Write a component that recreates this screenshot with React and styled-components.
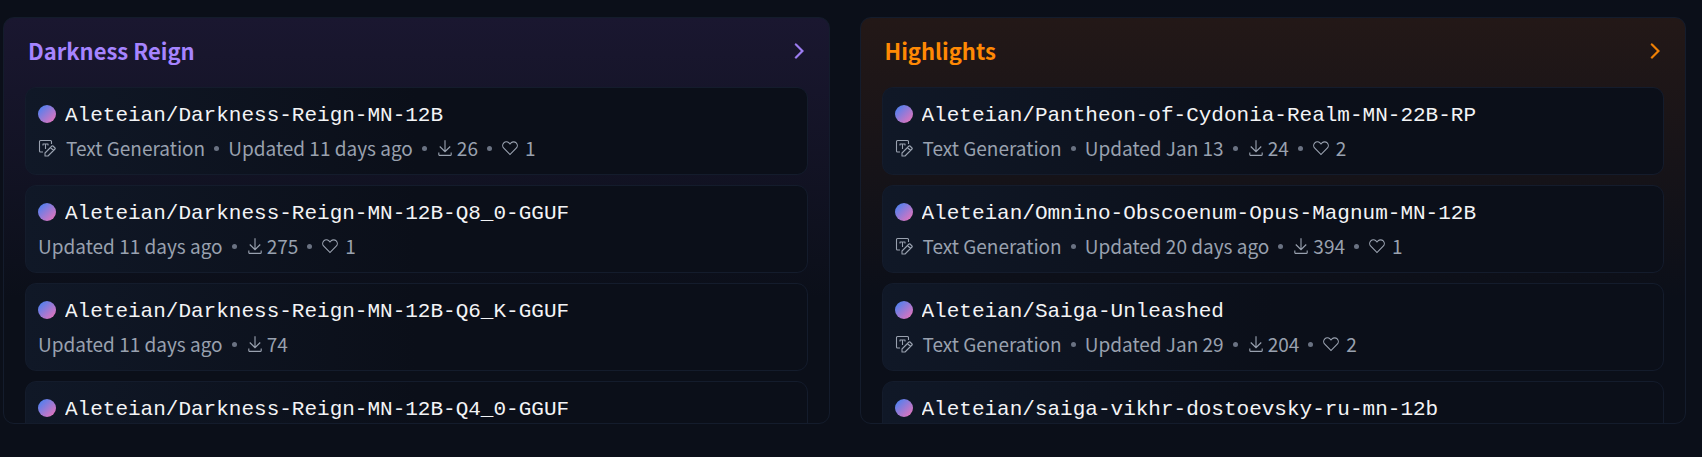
import styled, { createGlobalStyle } from "styled-components";

const darkness = [
	{ name: "Aleteian/Darkness-Reign-MN-12B", task: "Text Generation", updated: "11 days ago", downloads: 26, likes: 1 },
	{ name: "Aleteian/Darkness-Reign-MN-12B-Q8_0-GGUF", updated: "11 days ago", downloads: 275, likes: 1 },
	{ name: "Aleteian/Darkness-Reign-MN-12B-Q6_K-GGUF", updated: "11 days ago", downloads: 74 },
	{ name: "Aleteian/Darkness-Reign-MN-12B-Q4_0-GGUF" },
];

const highlights = [
	{ name: "Aleteian/Pantheon-of-Cydonia-Realm-MN-22B-RP", task: "Text Generation", updated: "Jan 13", downloads: 24, likes: 2 },
	{ name: "Aleteian/Omnino-Obscoenum-Opus-Magnum-MN-12B", task: "Text Generation", updated: "20 days ago", downloads: 394, likes: 1 },
	{ name: "Aleteian/Saiga-Unleashed", task: "Text Generation", updated: "Jan 29", downloads: 204, likes: 2 },
	{ name: "Aleteian/saiga-vikhr-dostoevsky-ru-mn-12b" },
];

const ChevronIcon = () => (
	<svg width="18" height="24" viewBox="4 0 24 32" fill="currentColor" stroke="currentColor" aria-hidden="true">
		<path d="M22 16 12 26l-1.4-1.4 8.6-8.6-8.6-8.6L12 6z" />
	</svg>
);

const TextIcon = () => (
	<svg width="18" height="18" viewBox="0 0 36 36" fill="none" stroke="currentColor" strokeWidth="2.2" strokeLinejoin="round" aria-hidden="true">
		<path d="M27 10V5q0-2-2-2H5Q3 3 3 5v19q0 2 2 2h5" />
		<path d="M10 13v-3h10v3M15 10v10" />
		<path d="M14 34v-6l14-14q1-1 2 0l4 4q1 1 0 2L20 34zM25 17l6 6" />
	</svg>
);

const DownloadIcon = () => (
	<svg width="18" height="18" viewBox="0 0 32 32" fill="currentColor" aria-hidden="true">
		<path d="M26 24v4H6v-4H4v4a2 2 0 0 0 2 2h20a2 2 0 0 0 2-2v-4zm0-10-1.410-1.410L17 20.170V2h-2v18.170l-7.590-7.580L6 14l10 10z" />
	</svg>
);

const HeartIcon = () => (
	<svg width="18" height="18" viewBox="0 0 32 32" fill="currentColor" aria-hidden="true">
		<path d="M22.450 6a5.470 5.470 0 0 1 3.910 1.640 5.700 5.700 0 0 1 0 8L16 26.130 5.640 15.640a5.700 5.700 0 0 1 0-8 5.480 5.480 0 0 1 7.820 0L16 10.240l2.530-2.580A5.440 5.440 0 0 1 22.450 6m0-2a7.470 7.470 0 0 0-5.340 2.240L16 7.360l-1.110-1.120a7.490 7.490 0 0 0-10.680 0 7.720 7.720 0 0 0 0 10.820L16 29l11.790-11.940a7.720 7.720 0 0 0 0-10.820A7.490 7.490 0 0 0 22.450 4z" />
	</svg>
);

const Model = ({ name, task, updated, downloads, likes }) => (
	<li>
		<Card href="#">
			<CardHeader>
				<Avatar />
				<Name>{name}</Name>
			</CardHeader>
			<Meta>
				{task && (
					<>
						<Task>
							<TextIcon />
							{task}
						</Task>
						<Dot />
					</>
				)}
				{updated && <span>Updated {updated}</span>}
				{downloads && (
					<>
						<Dot />
						<Stat>
							<DownloadIcon />
							{downloads}
						</Stat>
					</>
				)}
				{likes && (
					<>
						<Dot />
						<Stat $wide>
							<HeartIcon />
							{likes}
						</Stat>
					</>
				)}
			</Meta>
		</Card>
	</li>
);

const Collection = ({ title, color, tint, models }) => (
	<Panel $tint={tint}>
		<Heading>
			<HeadingLink href="#" $color={color}>
				{title}
				<ChevronIcon />
			</HeadingLink>
		</Heading>
		<List>
			{models.map((model) => (
				<Model key={model.name} {...model} />
			))}
		</List>
	</Panel>
);

export default function App() {
	return (
		<>
			<GlobalStyle />
			<Collections>
				<Collection title="Darkness Reign" color="#a684ff" tint="#1a1730" models={darkness} />
				<Collection title="Highlights" color="#ff8904" tint="#231817" models={highlights} />
			</Collections>
		</>
	);
}

const GlobalStyle = createGlobalStyle`
	* {
		box-sizing: border-box;
	}

	body {
		margin: 0;
		background: #0b0f19;
		font-family: "Noto Sans CJK JP", "Noto Sans", sans-serif;
	}
`;

const Collections = styled.main`
	display: grid;
	grid-template-columns: repeat(2, minmax(0, 1fr));
	gap: 30px;
	padding: 17px 16px 32px 3px;
`;

const Panel = styled.section`
	max-height: 407px;
	overflow: hidden;
	padding: 0 21px;
	border: 1px solid #141c2c;
	border-radius: 11px;
	background: linear-gradient(to bottom, ${(props) => props.$tint}, #0b0f19 280px);
`;

const Heading = styled.h2`
	margin: 0;
	padding-bottom: 4px;
	font-size: 22px;
	font-weight: 700;
	line-height: 65px;
`;

const HeadingLink = styled.a`
	display: flex;
	align-items: center;
	justify-content: space-between;
	padding-left: 3px;
	color: ${(props) => props.$color};
	text-decoration: none;
`;

const List = styled.ul`
	display: flex;
	flex-direction: column;
	gap: 10px;
	margin: 0;
	padding: 0;
	list-style: none;
`;

const Card = styled.a`
	display: block;
	height: 88px;
	padding: 12px;
	border: 1px solid #141c2c;
	border-radius: 11px;
	background: linear-gradient(to right, #101827, #0b0f19 50%);
	color: #f3f4f6;
	text-decoration: none;
`;

const CardHeader = styled.div`
	display: flex;
	align-items: center;
	gap: 9px;
	height: 28px;
`;

const Avatar = styled.span`
	flex: none;
	width: 18px;
	height: 18px;
	border-radius: 50%;
	background: linear-gradient(to bottom right, #3b82f6, #f472b6);
`;

const Name = styled.h3`
	margin: 0;
	padding-top: 4px;
	overflow: hidden;
	font-family: "Liberation Mono", monospace;
	font-size: 21px;
	font-weight: 400;
	line-height: 24px;
	white-space: nowrap;
	text-overflow: ellipsis;
`;

const Meta = styled.div`
	display: flex;
	align-items: center;
	gap: 9px;
	height: 40px;
	color: #99a1af;
	font-size: 19px;
	line-height: 28px;
	white-space: nowrap;
`;

const Task = styled.span`
	display: flex;
	align-items: center;
	gap: 10px;
`;

const Stat = styled.span`
	display: flex;
	align-items: center;
	gap: ${(props) => (props.$wide ? "6px" : "3px")};
`;

const Dot = styled.span`
	width: 5px;
	height: 5px;
	border-radius: 50%;
	background: #6a7282;
`;
